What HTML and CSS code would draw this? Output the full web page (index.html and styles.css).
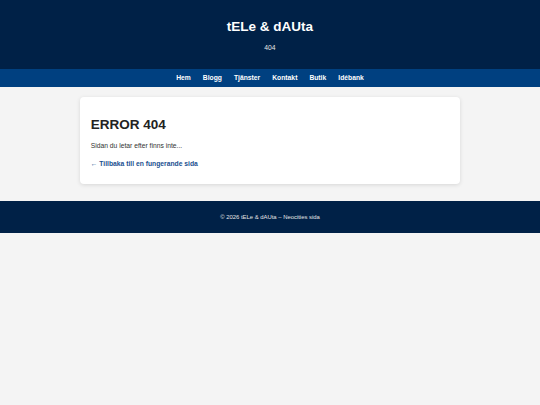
FILE: index.html
```html
<!DOCTYPE html>
<html lang="sv">
<head>
<meta charset="utf-8">
<title>404 – tELe &amp; dAUta</title>
<link rel="stylesheet" href="styles.css">
</head>
<body>
<header class="site-header">
  <h1 class="site-title">tELe &amp; dAUta</h1>
  <p class="site-sub">404</p>
</header>
<nav class="site-nav">
  <a href="#">Hem</a>
  <a href="#">Blogg</a>
  <a href="#">Tjänster</a>
  <a href="#">Kontakt</a>
  <a href="#">Butik</a>
  <a href="#">Idébank</a>
</nav>
<main class="main">
  <section class="card">
    <h2 class="card-title">ERROR 404</h2>
    <p class="card-text">Sidan du letar efter finns inte...</p>
    <p class="card-link"><a href="#">← Tillbaka till en fungerande sida</a></p>
  </section>
</main>
<footer class="site-footer">
  <p>© 2026 tELe &amp; dAUta – Neocities sida</p>
</footer>
</body>
</html>
```
FILE: styles.css
```css
html, body {
  margin: 0;
  padding: 0;
}
body {
  background: #f4f4f4;
  font-family: "Liberation Sans", Arial, sans-serif;
  font-size: 6.75px;
  color: #333;
}
.site-header {
  background: #002147;
  color: #fff;
  text-align: center;
  padding: 19px 0 17.5px;
}
.site-title {
  margin: 0 0 10px;
  font-size: 13.5px;
  font-weight: bold;
  line-height: 15.08px;
}
.site-sub {
  margin: 0;
  font-size: 6.75px;
  line-height: 7.54px;
  color: #e6e6e6;
}
.site-nav {
  background: #004080;
  display: flex;
  justify-content: center;
  gap: 12px;
  padding: 5.2px 0;
  height: 7.6px;
  line-height: 7.54px;
}
.site-nav a {
  color: #fff;
  text-decoration: none;
  font-weight: bold;
}
.main {
  padding: 10px 0 17px;
}
.card {
  width: 358.7px;
  margin: 0 auto;
  background: #fff;
  border-radius: 4px;
  box-shadow: 0 1px 4px rgba(0, 0, 0, 0.12);
  padding: 19.5px 10.5px 16px;
}
.card-title {
  margin: 0 0 10.6px;
  font-size: 13.5px;
  line-height: 15.08px;
  color: #222;
}
.card-text {
  margin: 0 0 10.4px;
  line-height: 7.54px;
}
.card-link {
  margin: 0;
  line-height: 7.54px;
}
.card-link a {
  color: #1a4f8f;
  font-weight: bold;
  text-decoration: none;
}
.site-footer {
  background: #002147;
  color: #e6e6e6;
  text-align: center;
  font-size: 5.9px;
  padding: 13px 0;
}
.site-footer p {
  margin: 0;
  line-height: 6.6px;
}
```
